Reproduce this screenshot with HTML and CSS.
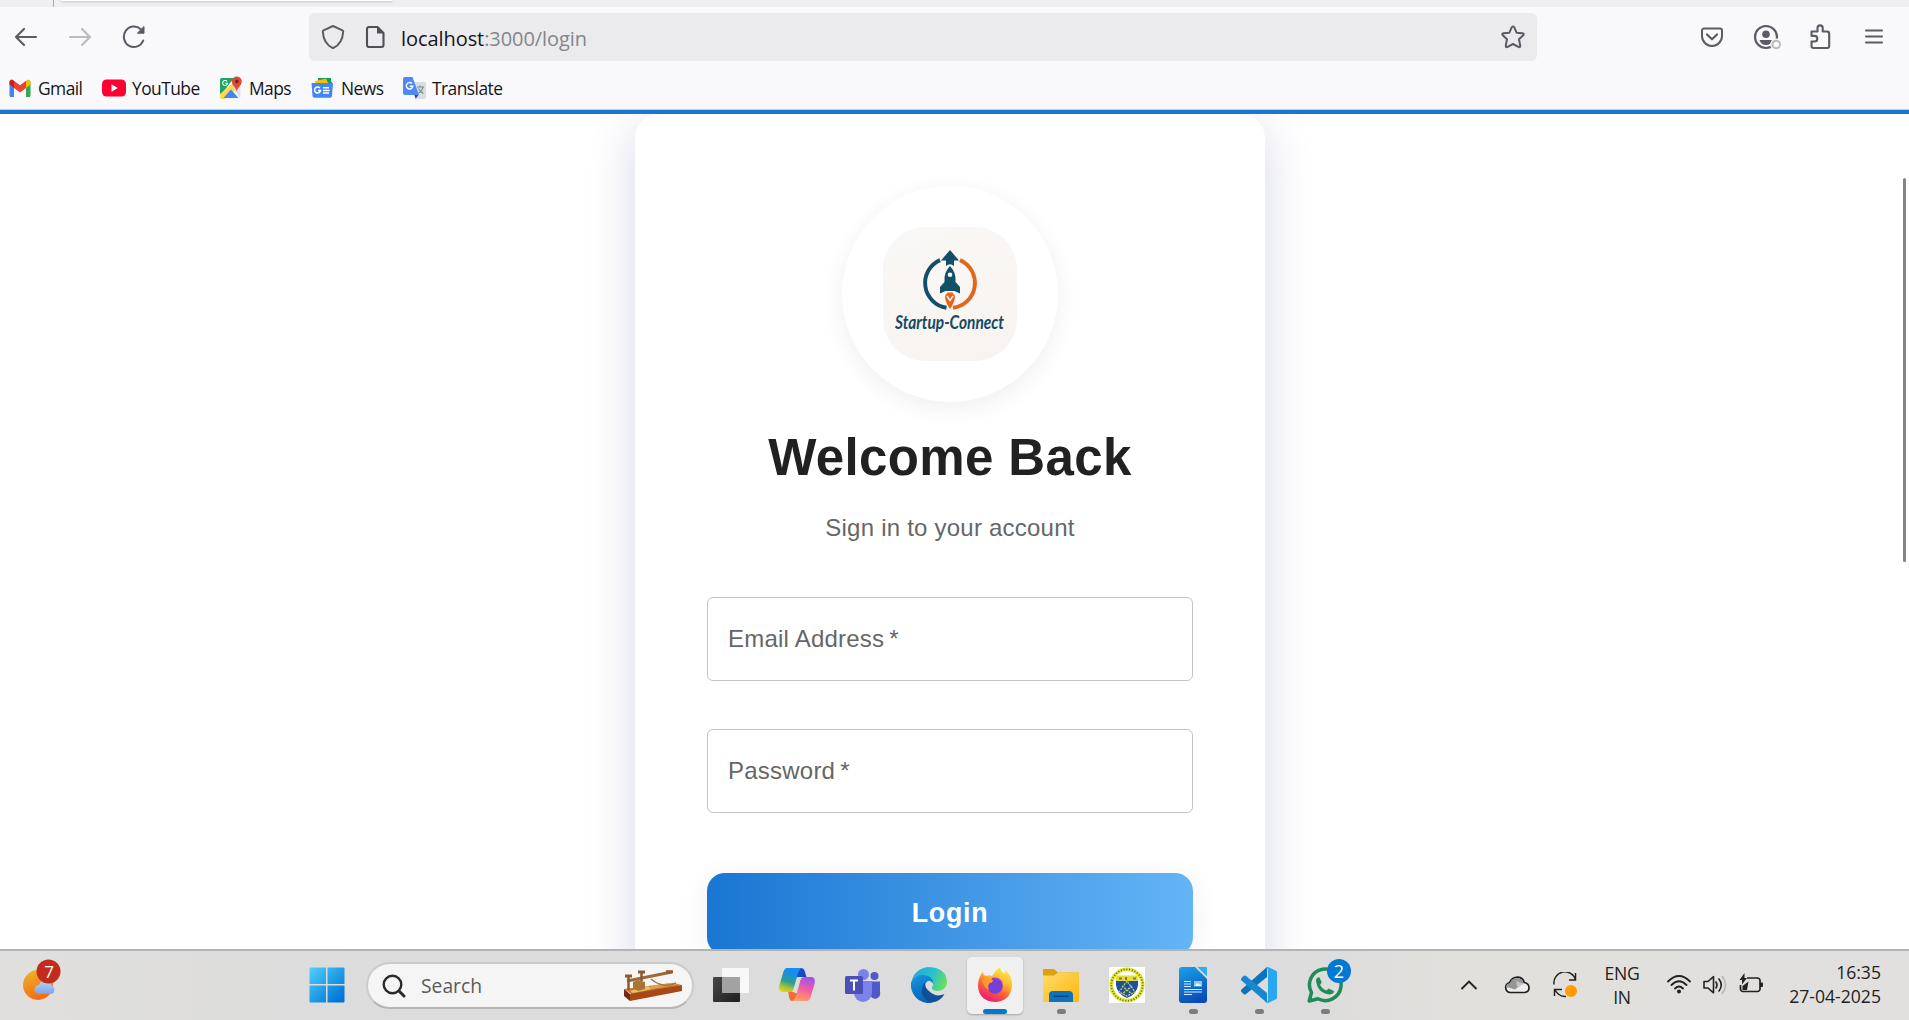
FILE: index.html
```html
<!DOCTYPE html>
<html lang="en">
<head>
<meta charset="utf-8">
<title>Startup-Connect Login</title>
<link rel="stylesheet" href="styles.css">
</head>
<body>
<div class="screen">
  <header class="browser">
    <div class="tabstrip"><div class="tab-edge"></div></div>
    <div class="navbar">
      <div class="nav-buttons">
        <svg class="ic24" viewBox="0 0 24 24"><path d="M22 12H2M10 4L2 12l8 8" fill="none" stroke="#5b5b66" stroke-width="2.200" stroke-linecap="round" stroke-linejoin="round"/></svg>
        <svg class="ic24" viewBox="0 0 24 24"><path d="M2 12H22M14 4L22 12l-8 8" fill="none" stroke="#bbbbc1" stroke-width="2.200" stroke-linecap="round" stroke-linejoin="round"/></svg>
        <svg class="ic24" viewBox="0 0 24 24"><path d="M21.200 15.500A10 10.300 0 1 1 18.500 4" fill="none" stroke="#5b5b66" stroke-width="2" stroke-linecap="round"/><path d="M22 1.500V8.200H15.300z" fill="#5b5b66" stroke="#5b5b66" stroke-linejoin="round"/></svg>
      </div>
      <div class="urlbar">
        <svg class="ic24" viewBox="0 0 24 24"><path d="M12 1L21.500 5.300Q22.300 5.700 22.200 6.700C21.700 14.500 18 20.500 12 23.200 6 20.500 2.300 14.500 1.800 6.700Q1.700 5.700 2.500 5.300z" fill="none" stroke="#5b5b66" stroke-width="2" stroke-linejoin="round"/></svg>
        <svg class="ic24 doc" viewBox="0 0 24 24"><path d="M6 2H14.500L20.500 8V20a2 2 0 0 1-2 2H6a2 2 0 0 1-2-2V4a2 2 0 0 1 2-2z" fill="none" stroke="#4f4f58" stroke-width="2.100" stroke-linejoin="round"/><path d="M14 1.500L21 8.500H14z" fill="#4f4f58"/></svg>
        <span class="url"><b>localhost</b>:3000/login</span>
        <svg class="ic24 star" viewBox="0 0 24 24"><path d="M12 1.400Q12.900 1.400 13.300 2.300L15.600 7.700 21.500 8.300Q23.600 8.700 22.200 10.300L18 14.200 19.200 20.500Q19.400 22.800 17.400 21.900L12 19 6.600 21.900Q4.600 22.800 4.800 20.500L6 14.200 1.800 10.300Q.400 8.700 2.500 8.300L8.400 7.700 10.700 2.300Q11.100 1.400 12 1.400z" fill="none" stroke="#5b5b66" stroke-width="2" stroke-linejoin="round"/></svg>
      </div>
      <div class="nav-tools">
        <svg class="ic28" viewBox="0 0 28 28"><path d="M6 5.500H22a2 2 0 0 1 2 2V13a10 10 0 0 1-20 0V7.500a2 2 0 0 1 2-2z" fill="none" stroke="#5b5b66" stroke-width="2"/><path d="M9 11.500l5 4.800 5-4.800" fill="none" stroke="#5b5b66" stroke-width="2.200" stroke-linecap="round" stroke-linejoin="round"/></svg>
        <svg class="ic28 account" viewBox="0 0 28 28"><circle cx="14" cy="14" r="11" fill="none" stroke="#5b5b66" stroke-width="2.200"/><circle cx="14" cy="11.300" r="3.800" fill="#5b5b66"/><path d="M7.500 17H20.500Q19 22 14 22T7.500 17z" fill="#5b5b66"/><circle cx="24.200" cy="21.500" r="6" fill="#f9f9fb"/><circle cx="24.200" cy="21.500" r="3.800" fill="#f9f9fb" stroke="#bbbbc0" stroke-width="2"/></svg>
        <svg class="ic28" viewBox="0 0 28 28"><path d="M5.500 8.500H11.500V5a2.600 2.600 0 0 1 5.200 0V8.500H21a2.200 2.200 0 0 1 2.200 2.200V23a2 2 0 0 1-2 2H7.500a2 2 0 0 1-2-2V18.500H8.500a2.800 2.800 0 0 0 0-5.600H5.500z" fill="none" stroke="#5b5b66" stroke-width="2.100" stroke-linejoin="round"/></svg>
        <svg class="ic28" viewBox="0 0 28 28"><path d="M6 7.500H22M6 13.500H22M6 19.500H22" stroke="#5b5b66" stroke-width="2" stroke-linecap="round"/></svg>
      </div>
    </div>
    <nav class="bookmarks">
      <a class="bm bm-gmail"><svg viewBox="0 0 24 24"><path d="M1.500 5V19.500a1.500 1.500 0 0 0 1.500 1.500H6V10z" fill="#4285f4"/><path d="M22.500 5V19.500a1.500 1.500 0 0 1-1.500 1.500H18V10z" fill="#34a853"/><path d="M18 4.800L20.500 3.400Q22.500 3.400 22.500 6V8.500L18 12z" fill="#fbbc04"/><path d="M6 4.800L12 9.300l6-4.500V12l-6 4.500L6 12z" fill="#ea4335"/><path d="M6 4.800L4 3.400Q1.500 3.400 1.500 6V8.500L6 12z" fill="#c5221f"/></svg><span>Gmail</span></a>
      <a class="bm bm-youtube"><svg viewBox="0 0 24 24"><rect x="0" y="3.500" width="24" height="17" rx="4.500" fill="#ff0033"/><path d="M9.500 8.300v7.400l6.300-3.700z" fill="#fff"/></svg><span>YouTube</span></a>
      <a class="bm bm-maps"><svg viewBox="0 0 24 24"><path d="M1 4a2 2 0 0 1 2-2H15L1 20z" fill="#1fa463"/><path d="M1 18L14 7l6 4-14 12H3a2 2 0 0 1-2-2z" fill="#fdd84e"/><path d="M12 13.500L19.500 22H4.500z" fill="#4285f4"/><path d="M14 12L18.500 8 21.500 12V20a2 2 0 0 1-1 2z" fill="#dfe2e5"/><path d="M17.800 0.500a5 5 0 0 1 5 5c0 4-3.700 5-5 10-1.300-5-5-6-5-10a5 5 0 0 1 5-5z" fill="#de4b3c"/><circle cx="17.800" cy="5.400" r="1.800" fill="#7a231d"/><path d="M8 5.300A2.500 2.500 0 1 0 8.600 7.300H6.300" fill="none" stroke="#fff" stroke-width="1.100"/></svg><span>Maps</span></a>
      <a class="bm bm-news"><svg viewBox="0 0 24 24"><path d="M10 3L21 6 20 12H10z" fill="#ea4335"/><path d="M7 2H20V9H7z" fill="#149b5a"/><path d="M4 5L15 2.500 18 9H5z" fill="#fbbc04"/><path d="M.5 7h21.500l-1 13a2 2 0 0 1-2 1.800H3.500A2 2 0 0 1 1.500 20z" fill="#4285f4"/><path d="M8.800 12A3 3 0 1 0 9.500 14.500H7M12 11.700h6M12 14.400h6.500M12 17h6" fill="none" stroke="#fff" stroke-width="1.500"/></svg><span>News</span></a>
      <a class="bm bm-translate"><svg viewBox="0 0 24 24"><path d="M10 6H22a2 2 0 0 1 2 2V21a2 2 0 0 1-2 2H15z" fill="#dadce0"/><path d="M12 18h5l-3.300 5z" fill="#3247b5"/><path d="M3 1H10.500L17 19H3a2 2 0 0 1-2-2V3a2 2 0 0 1 2-2z" fill="#4c8bf5"/><path d="M9.800 7.500A3.200 3.200 0 1 0 10.700 10.300H7.800" fill="none" stroke="#fff" stroke-width="1.400"/><path d="M15 11h7M18.300 9.500V11M21 11.200Q20 15.500 16.500 17M16.500 12.500Q18 15.500 21.500 17.500" fill="none" stroke="#6f8f9a" stroke-width="1.200"/></svg><span>Translate</span></a>
    </nav>
  </header>

  <main class="page">
    <section class="card">
      <div class="logo-ring">
        <div class="logo">
          <svg viewBox="0 0 134 134" width="134" height="134">
            <path d="M57 33.100A25 25 0 0 0 63.500 80.700" fill="none" stroke="#12506a" stroke-width="3.900"/>
            <path d="M77 33.100A25 25 0 0 1 70 80.800" fill="none" stroke="#e2671a" stroke-width="3.900"/>
            <path d="M67 23L76 33.500H71V39Q67 35.500 63 39V33.500H58z" fill="#12506a"/>
            <path d="M67 39Q73.500 45.500 72.500 55L77 60V66.500L71.500 64H62.500L57 66.500V60L61.500 55Q60.500 45.500 67 39z" fill="#12506a"/>
            <circle cx="67" cy="47.700" r="2.300" fill="#f9f6f3"/>
            <path d="M64.500 65.500H69.500L72 69Q72 75 67 82 62 75 62 69z" fill="#e2671a"/>
            <path d="M64 69l3 4.500 3-4.500" fill="none" stroke="#f9f6f3" stroke-width="1.400"/>
            <text class="logo-word" x="12" y="102" textLength="109" lengthAdjust="spacingAndGlyphs">Startup-Connect</text>
          </svg>
        </div>
      </div>
      <h1 class="title">Welcome Back</h1>
      <p class="subtitle">Sign in to your account</p>
      <div class="field">Email Address<span class="req">*</span></div>
      <div class="field">Password<span class="req">*</span></div>
      <div class="login">Login</div>
    </section>
    <div class="scrollbar"></div>
  </main>

  <footer class="taskbar">
    <div class="weather">
      <svg viewBox="0 0 40 46" width="40" height="46"><defs><linearGradient id="sun" x1="0" y1="0" x2=".4" y2="1"><stop offset="0" stop-color="#ecb92e"/><stop offset="1" stop-color="#f76b10"/></linearGradient><linearGradient id="cl" x1="0" y1="0" x2="0" y2="1"><stop offset="0" stop-color="#b7d2fb"/><stop offset="1" stop-color="#7ba3ea"/></linearGradient></defs><circle cx="16" cy="27" r="15" fill="url(#sun)"/><path d="M17 36a4.500 4.500 0 0 1 0-9q2-5 7-4t5.500 4.500a4.500 4.500 0 0 1 0 8.500z" fill="url(#cl)"/><circle cx="26.500" cy="13.500" r="12" fill="#c42b1c"/></svg>
      <span class="badge-text">7</span>
    </div>
    <div class="slot start"><svg viewBox="0 0 36 36"><defs><linearGradient id="w" gradientUnits="userSpaceOnUse" x1="0" y1="0" x2="32" y2="32"><stop offset="0" stop-color="#4fd3ff"/><stop offset="1" stop-color="#0074d4"/></linearGradient></defs><path d="M1.500 .5H17V17H.5V1.500a1 1 0 0 1 1-1zM18.500 .5H34.500a1 1 0 0 1 1 1V17H18.500zM.5 18.500H17V35.500H1.500a1 1 0 0 1-1-1zM18.500 18.500H35.500V34.500a1 1 0 0 1-1 1H18.500z" fill="url(#w)"/></svg></div>
    <div class="search">
      <svg width="24" height="24" viewBox="0 0 24 24"><circle cx="10.500" cy="10.500" r="8.800" fill="none" stroke="#2a2a2a" stroke-width="2.400"/><path d="M17 17l5 5" stroke="#2a2a2a" stroke-width="3" stroke-linecap="round"/></svg>
      <span>Search</span>
      <svg class="morse" width="60" height="32" viewBox="0 0 60 32"><path d="M1 19L50 13 59 15 10 25z" fill="#c9772f"/><path d="M7 21l18-5 4 3-19 4z" fill="#e8c06a"/><path d="M27 16l20-3 8 1.500-26 4.500z" fill="#dea153"/><path d="M1 19l6 5V31l-6-5z" fill="#7b2412"/><path d="M7 24L59 15V21L7 31z" fill="#a84718"/><path d="M10 12l5-2 7 2v7l-7 2-5-3z" fill="#aa7338"/><path d="M4 11L49 2" stroke="#9d6a36" stroke-width="3"/><path d="M28 9q6 5 12 6t13-2" fill="none" stroke="#b07434" stroke-width="1.500"/><path d="M2 6h7M15 2h7M43 1.800h7" stroke="#8f5b30" stroke-width="3"/><path d="M5.500 6v14M18.500 3v8" stroke="#8a5930" stroke-width="2.500"/></svg>
    </div>
    <div class="apps">
      <div class="slot"><svg viewBox="0 0 36 36"><defs><linearGradient id="tv" x1="0" y1="0" x2="1" y2="1"><stop offset="0" stop-color="#474746"/><stop offset="1" stop-color="#1f1f1f"/></linearGradient></defs><rect x="0" y="10" width="27" height="25" rx="1" fill="url(#tv)"/><rect x="9" y="1" width="27" height="25" rx="1" fill="#fff" opacity=".8"/><path d="M9 10h18v16H9z" fill="#999" opacity=".85"/></svg></div>
      <div class="slot"><svg viewBox="0 0 36 36"><defs><linearGradient id="c1" x1=".3" y1="0" x2="0" y2="1"><stop offset=".1" stop-color="#168df2"/><stop offset=".5" stop-color="#2e9d91"/><stop offset=".75" stop-color="#a9c72b"/><stop offset="1" stop-color="#f5d52d"/></linearGradient><linearGradient id="c2" x1=".6" y1="0" x2=".3" y2="1"><stop offset="0" stop-color="#a153ef"/><stop offset=".5" stop-color="#f2609b"/><stop offset="1" stop-color="#fda364"/></linearGradient></defs><path d="M17 1H22Q25 1 26 5L27.500 10H18z" fill="#174bc4"/><path d="M9 23L19 27 17 34H13Q11 34 10 30z" fill="#f4683a"/><path d="M8 1H23Q20 2 18.500 8L14.500 22Q13.500 25 10 25H4Q-1 25 .5 18L4 6Q5.500 1 8 1z" fill="url(#c1)"/><path d="M28 34H13Q16 33 17.500 27L21.500 13Q22.500 10 26 10H32Q37 10 35.500 17L32 29Q30.500 34 28 34z" fill="url(#c2)"/></svg></div>
      <div class="slot"><svg viewBox="0 0 36 36"><circle cx="29.500" cy="9" r="4" fill="#5059c9"/><path d="M25 14.500H35V25a5 5 0 0 1-10 3z" fill="#5059c9"/><circle cx="18.500" cy="7.500" r="5.500" fill="#7b83eb"/><path d="M9 14H27V26a9 9 0 0 1-18 0z" fill="#7b83eb"/><rect x="0" y="9" width="18" height="18" rx="1.500" fill="#4a50b5"/><path d="M5 13.500h8M9 13.500v10" stroke="#fff" stroke-width="2"/></svg></div>
      <div class="slot"><svg viewBox="0 0 36 36"><defs><linearGradient id="e1" x1="0" y1=".3" x2="1" y2=".6"><stop offset="0" stop-color="#23a8df"/><stop offset=".55" stop-color="#29c2cc"/><stop offset="1" stop-color="#69e05b"/></linearGradient><linearGradient id="e2" x1="0" y1="0" x2=".4" y2="1"><stop offset="0" stop-color="#1497df"/><stop offset="1" stop-color="#0864b4"/></linearGradient></defs><path d="M.5 15A18 18 0 0 1 18 0Q36 1 36 15.500 35 24 26 24 20 23.500 21 20 24 16 19 14 6 5 .5 15z" fill="url(#e1)"/><path d="M.2 15Q5 7 13 8 22 9 22.500 17 20 13 17 14 12 17 14 24 17 31 26 31L20 36A18 18 0 0 1 .2 15z" fill="url(#e2)"/><path d="M14.500 15Q9 21 11.500 28 15 35 21 35.500 30 34 33.500 27 25 31 18 24 13 20 14.500 15z" fill="#114f98"/></svg></div>
      <div class="slot active"><svg viewBox="0 0 36 36"><defs><linearGradient id="f1" x1=".8" y1="0" x2=".3" y2="1"><stop offset="0" stop-color="#fff24a"/><stop offset=".4" stop-color="#ffb52c"/><stop offset=".65" stop-color="#ff5f35"/><stop offset="1" stop-color="#e5167f"/></linearGradient></defs><path d="M5.500 5Q6.500 8 9 9 12 7.500 15 9 18 4 23 0 24 5 27 6.500 29 4.500 28.500 3 36 11 35 19 33 34.500 18 35 2 34 1 19 1 11 5.500 5z" fill="url(#f1)"/><circle cx="18" cy="19" r="7.800" fill="#7540d8"/><path d="M5 14Q9 9 16 13 16 15.500 12.500 16 10 19 12 23 8 22 5 14z" fill="#ff9a2b"/><path d="M15 11.500Q22 10 25 16" fill="none" stroke="#b43ad5" stroke-width="1.600"/></svg><i></i></div>
      <div class="slot running"><svg viewBox="0 0 36 36"><defs><linearGradient id="x1" x1="0" y1="0" x2="1" y2="1"><stop offset="0" stop-color="#ffdc69"/><stop offset="1" stop-color="#fcb60d"/></linearGradient></defs><path d="M0 3a1 1 0 0 1 1-1H11l4 3.500H35a1 1 0 0 1 1 1V12H0z" fill="#dda10c"/><path d="M0 8.500H11l4-3H35a1 1 0 0 1 1 1V34a1 1 0 0 1-1 1H1a1 1 0 0 1-1-1z" fill="url(#x1)"/><path d="M6 35V28a4 4 0 0 1 4-4H26a4 4 0 0 1 4 4v7z" fill="#0e72bd"/><path d="M11 29.300H25" stroke="#07467f" stroke-width="1.500" stroke-linecap="round"/></svg><i></i></div>
      <div class="slot"><svg viewBox="0 0 36 36"><path d="M0 0H36V36H0z" fill="#fff"/><circle cx="18" cy="18" r="15.700" fill="#fff" stroke="#e2e632" stroke-width="3.800"/><circle cx="18" cy="18" r="15.700" fill="none" stroke="#66702e" stroke-width="1.800" stroke-dasharray="1.100 1.700"/><path d="M7 9H29V18Q28 27 18 31 8 27 7 18z" fill="#1b50a1"/><path d="M7 8.500H29V14H7z" fill="#e6dc3e"/><path d="M10 11.500h3M17 10v3M24 11.500h3" stroke="#85772c" stroke-width="2"/><path d="M18 14L10 25 18 29 26 25zM13 19l10 8M23 19l-10 8" fill="none" stroke="#c8cd5b" stroke-width="1.300" stroke-dasharray="2 1"/></svg></div>
      <div class="slot running"><svg viewBox="0 0 36 36"><defs><linearGradient id="wr" x1=".3" y1="0" x2=".6" y2="1"><stop offset="0" stop-color="#1a9be5"/><stop offset="1" stop-color="#0849b5"/></linearGradient></defs><path d="M7 0H20L32 12V33a3 3 0 0 1-3 3H7a3 3 0 0 1-3-3V3a3 3 0 0 1 3-3z" fill="url(#wr)"/><path d="M22.500 0H31a1 1 0 0 1 1 1V9.500z" fill="#2daef2"/><path d="M9 14.500h7M9 17h7M9 19.500h7M9 22.500h18M9 25h18M9 27.500h8" stroke="#d3eaff" stroke-width="1"/><rect x="19" y="14" width="8" height="5.500" fill="#8fc9f5"/><path d="M20 19l2-3 2 2 1-1 1 2z" fill="#fff"/></svg><i></i></div>
      <div class="slot running"><svg viewBox="0 0 36 36"><path d="M26 0V10L5 27Q3.500 28 2.500 27L.5 25Q-.5 23.500 .5 22.500z" fill="#0b75bb"/><path d="M26 36V26L5 9Q3.500 8 2.500 9L.5 11Q-.5 12.500 .5 13.500z" fill="#1788cf"/><path d="M27 0L35 3.700Q36 4.200 36 5.500V30.500Q36 31.800 35 32.300L27 36Q26 36 25 35 27 35 27 33V3Q27 1 25 1Q26 0 27 0z" fill="#28a8f1"/></svg><i></i></div>
      <div class="slot running whatsapp"><svg viewBox="0 0 36 36"><path d="M2.200 34L4.500 25.500A15.800 15.800 0 1 1 11 31.800z" fill="none" stroke="#1d8d57" stroke-width="3.500" stroke-linejoin="round"/><path d="M9 13Q10 9.500 12.500 10.500L14.500 15Q14.500 16.500 13 18 16 22.500 19.500 23.500L21.500 21.500 27 24Q27 27 22.500 27.500 10 26 9 13z" fill="#1d8d57"/></svg><b class="count">2</b><i></i></div>
    </div>
    <div class="tray">
      <svg class="chev" width="24" height="24" viewBox="0 0 24 24"><path d="M4.500 16L12 8.500 19.500 16" fill="none" stroke="#222" stroke-width="1.900"/></svg>
      <svg width="26" height="24" viewBox="0 0 26 24"><path d="M6 19.500a5 5 0 0 1-.5-9.800Q8 4 14 4.200q5 .6 6.200 5.300 4.800 1 4.800 5.300 0 4.500-4.500 4.700z" fill="#eee" stroke="#1d1d1d" stroke-width="1.700"/><path d="M6 10Q8 5 13 5q5 0 6.500 5L11 16.500Q7 15 2 14q0-3 4-4z" fill="#969696"/><path d="M12 8L20 11 13 14z" fill="#c4c4c4"/></svg>
      <svg class="sync" width="24" height="26" viewBox="0 0 24 26"><path d="M1 12.500A11 11 0 0 1 22.500 8M22.500 1V8H16M1.500 24V17.500H9M2 18Q6 25 13 24.500" fill="none" stroke="#222" stroke-width="1.500"/><circle cx="18" cy="19" r="6" fill="#ff9c08"/></svg>
      <div class="lang"><span>ENG</span><span>IN</span></div>
      <svg class="wifi" width="24" height="24" viewBox="0 0 24 24"><path d="M1 8.500Q12-2.500 23 8.500M4.500 12Q12 4.500 19.500 12M8 15.500Q12 11.500 16 15.500" fill="none" stroke="#222" stroke-width="1.800" stroke-linecap="round"/><circle cx="12" cy="18.500" r="2" fill="#222"/></svg>
      <svg class="snd" width="24" height="24" viewBox="0 0 24 24"><path d="M1 8.500H5L10.500 3.700V19.800L5 15H1zM13 9q2 3 0 6M16 6q4.500 6 0 12" fill="none" stroke="#222" stroke-width="1.600" stroke-linejoin="round" stroke-linecap="round"/><path d="M19 3q7 9 0 18" fill="none" stroke="#b5b5b5" stroke-width="1.500"/></svg>
      <svg class="bat" width="24" height="24" viewBox="0 0 24 24"><path d="M8 5H18.500a2.500 2.500 0 0 1 2.500 2.500v8.500a2.500 2.500 0 0 1-2.500 2.500H4a2.500 2.500 0 0 1-2.500-2.500V12" fill="none" stroke="#222" stroke-width="1.700"/><path d="M21 9.500h2a1 1 0 0 1 1 1v2.500a1 1 0 0 1-1 1h-2zM5.500 0V5H8L3 11.500V7H.5zM3.500 17V13L9.500 8.500 8 17z" fill="#222"/></svg>
      <div class="clock"><span>16:35</span><span>27-04-2025</span></div>
    </div>
  </footer>
</div>
</body>
</html>
```
FILE: styles.css
```css
* { box-sizing: border-box; }
body { margin: 0; background: #fff; overflow: hidden; }
svg { display: block; flex: none; }
.screen { width: 1909px; height: 1020px; display: flex; flex-direction: column; font-family: "Open Sans", "Noto Sans", sans-serif; }

/* Browser chrome */
.browser { height: 110px; flex: none; background: #f9f9fb; border-bottom: 1px solid #ccccd0; }
.tabstrip { height: 7px; background: #efeef3; border-left: 53px solid #efeef3; overflow: hidden; }
.tab-edge { height: 1px; width: 332px; margin-left: 8px; background: #fff; border-radius: 0 0 5px 5px; box-shadow: 0 0 3px rgba(0,0,0,.5); }
.tabstrip::before { content: ""; float: left; width: 1px; height: 7px; background: #a9a9b0; }
.navbar { height: 60px; display: flex; align-items: center; }
.ic24 { width: 24px; height: 24px; }
.ic28 { width: 28px; height: 28px; }
.account { overflow: visible; }
.nav-buttons { display: flex; gap: 30px; width: 309px; padding-left: 14px; }
.urlbar { width: 1228px; height: 48px; background: #ebebed; border-radius: 6px; display: flex; align-items: center; padding: 0 12px; }
.doc { margin-left: 18px; }
.url { font-size: 20px; letter-spacing: -.07px; color: #85858a; margin-left: 14px; line-height: 28px; padding-top: 3px; }
.url b { font-weight: 400; color: #15141a; }
.star { margin-left: auto; }
.nav-tools { display: flex; gap: 26px; margin-left: 161px; }
.bookmarks { height: 42px; display: flex; padding-left: 8px; }
.bm { display: flex; align-items: center; gap: 6px; color: #15141a; font-size: 17.4px; letter-spacing: -.55px; white-space: nowrap; }
.bm svg { width: 24px; height: 24px; }
.bm-gmail { width: 94px; }
.bm-youtube { width: 117px; }
.bm-maps { width: 92px; }
.bm-news { width: 91px; }

/* Login page */
.page { height: 839px; flex: none; border-top: 4px solid #1976d2; position: relative; overflow: hidden; background: #fff; }
.card { width: 630px; height: 960px; margin: 0 auto 0 635px; padding: 72px; border-radius: 24px; background: #fff; box-shadow: 0 12px 48px rgba(31,38,135,.18); display: flex; flex-direction: column; align-items: center; font-family: "Liberation Sans", Arial, sans-serif; }
.logo-ring { width: 216px; height: 216px; flex: none; border-radius: 50%; display: flex; align-items: center; justify-content: center; box-shadow: 0 6px 24px rgba(0,0,0,.065); }
.logo { width: 134px; height: 134px; border-radius: 42px; background: linear-gradient(160deg, #faf8f6, #f7f3f0); }
.logo-word { font-family: Lato, sans-serif; font-style: italic; font-weight: 700; font-size: 19px; fill: #174a63; }
.title { margin: 24px 0 0; font-size: 51px; line-height: 63px; font-weight: 700; letter-spacing: .375px; color: #212121; }
.subtitle { margin: 21px 0 51px; font-size: 24px; line-height: 36px; letter-spacing: .225px; color: #666; }
.field { width: 486px; height: 84px; flex: none; border: 1px solid #c4c4c4; border-radius: 6px; display: flex; align-items: center; padding-left: 20px; font-size: 24px; letter-spacing: .225px; color: #666; }
.req { margin-left: 5px; }
.field + .field { margin-top: 48px; }
.login { width: 486px; height: 82px; flex: none; margin-top: 60px; border-radius: 18px; background: linear-gradient(90deg, #1976d2, #64b5f6); color: #fff; font-weight: 700; font-size: 26.8px; letter-spacing: .75px; display: flex; align-items: center; justify-content: center; padding-bottom: 2px; box-shadow: 0 6px 30px rgba(31,38,135,.07); }
.scrollbar { position: absolute; right: 3px; top: 64px; width: 3px; height: 384px; border-radius: 2px; background: #858585; }

/* Taskbar */
.taskbar { height: 71px; flex: none; border-top: 2px solid #b3b3b3; background: linear-gradient(90deg, #e0dfdd 0, #dcdcdc 20%, #dcdcdc 68%, #e2e0dd 76%, #e2e0df); display: flex; align-items: center; }
.weather { width: 293px; padding-left: 22px; position: relative; margin-top: -9px; }
.badge-text { position: absolute; left: 37px; top: 2px; width: 24px; line-height: 23px; text-align: center; font-size: 17px; color: #fff; }
.slot { width: 66px; height: 57px; flex: none; display: flex; align-items: center; justify-content: center; position: relative; }
.slot svg { width: 36px; height: 36px; margin-top: -2px; }
.start { width: 73px; padding-right: 6px; }
.search { width: 328px; height: 47px; border-radius: 24px; background: #f5f5f5; border: 2px solid #cbcbcb; border-bottom-color: #b4b4b4; display: flex; align-items: center; padding: 0 9px 0 14px; }
.search span { margin-left: 15px; font-size: 19.3px; line-height: 24px; color: #5b5b5b; }
.morse { margin-left: auto; }
.apps { display: flex; margin-left: 4px; }
.active::before { content: ""; position: absolute; inset: 0 5px; border-radius: 5px; background: #f0f0f0; box-shadow: 0 1px 2px rgba(0,0,0,.25); }
.active svg { position: relative; }
.slot i { position: absolute; bottom: 0; left: 29px; width: 9px; height: 5px; border-radius: 3px; background: #7c7c7c; }
.slot.active i { left: 21px; width: 24px; background: #0078d4; }
.count { position: absolute; left: 35px; top: 2px; width: 24px; height: 24px; border-radius: 50%; background: #0078d4; color: #fff; font-weight: 400; font-size: 18px; line-height: 24px; text-align: center; }
.tray { display: flex; align-items: center; margin-left: 99px; color: #222; font-size: 17.6px; }
.tray > svg { margin-top: -2px; }
.tray span { display: block; line-height: 23.500px; }
.tray > svg:nth-child(2) { margin-left: 23px; }
.tray .sync { margin-left: 23px; }
.lang { width: 50px; margin-left: 20px; text-align: center; letter-spacing: -.3px; }
.wifi { margin-left: 20px; }
.snd, .bat { margin-left: 12px; }
.clock { width: 118px; text-align: right; margin-top: -2px; }
```
